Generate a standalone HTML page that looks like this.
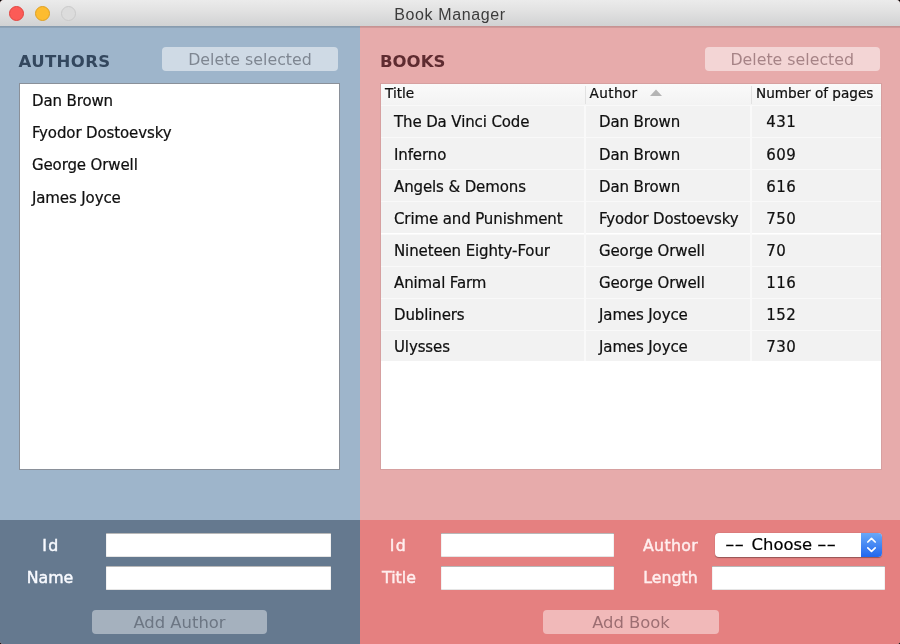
<!DOCTYPE html>
<html>
<head>
<meta charset="utf-8">
<title>Book Manager</title>
<style>
html,body{margin:0;padding:0;}
body{width:900px;height:644px;overflow:hidden;background:#000;font-family:"DejaVu Sans","Liberation Sans",sans-serif;position:relative;}
#win{will-change:transform;position:absolute;left:0;top:0;width:900px;height:644px;overflow:hidden;border-radius:4px 4px 3px 3px;background:#e8a9a9;}
.abs{position:absolute;}
#titlebar{left:0;top:0;width:900px;height:26px;background:linear-gradient(#ebebeb,#e2e2e2 40%,#d1d2d3);}
#tbline{left:0;top:26px;width:900px;height:1.5px;background:linear-gradient(rgba(0,0,0,0.16),rgba(0,0,0,0.08));}
#title{left:0;top:0;width:900px;height:26px;line-height:30px;text-align:center;font-family:"Liberation Sans",sans-serif;font-size:16px;letter-spacing:0.62px;color:#3c3c3c;}
.tl{position:absolute;top:5.5px;width:15px;height:15px;border-radius:50%;box-sizing:border-box;}
#lt-blue{left:0;top:26px;width:360px;height:494px;background:#9eb5cb;}
#dk-blue{left:0;top:519.7px;width:360px;height:125px;background:#65798f;}
#lt-pink{left:360px;top:26px;width:540px;height:494px;background:#e7abab;}
#dk-pink{left:360px;top:519.7px;width:540px;height:125px;background:#e58080;}
.h{font-weight:bold;font-size:16.5px;line-height:20px;white-space:nowrap;}
.btn{box-sizing:border-box;border-radius:4px;background:rgba(255,255,255,0.5);text-align:center;font-size:15.8px;line-height:25.6px;height:24px;white-space:nowrap;}
.box{box-sizing:border-box;background:#fff;border:1px solid #8a9099;}
.li{position:absolute;left:12.4px;font-size:15px;letter-spacing:-0.12px;-webkit-text-stroke:0.2px #000;line-height:20px;color:#111;white-space:nowrap;}
.lbl{font-size:15.8px;line-height:20.4px;-webkit-text-stroke:0.45px currentColor;color:#f8faff;text-align:center;white-space:nowrap;}
.fld{box-sizing:border-box;background:#fff;height:24px;box-shadow:inset 0 1px 0 rgba(0,0,0,0.28), inset 0 -1px 0 rgba(0,0,0,0.10), inset 1px 0 0 rgba(0,0,0,0.05), inset -1px 0 0 rgba(0,0,0,0.05);}
.th{background:linear-gradient(#fafafa,#f3f3f3);}
.ht{-webkit-text-stroke:0.2px #000;font-size:13.6px;line-height:20px;color:#111;white-space:nowrap;}
.tr{left:0;width:500px;height:32.15px;background:#f2f2f2;box-sizing:border-box;border-top:1.5px solid #f9f9f9;}
.td{top:6.5px;font-size:15px;letter-spacing:-0.12px;-webkit-text-stroke:0.2px #000;line-height:20px;color:#111;white-space:nowrap;}
.cb{top:1.6px;font-size:16.4px;line-height:22px;color:#000;white-space:nowrap;-webkit-text-stroke:0.2px #000;}
</style>
</head>
<body>
<div id="win">
  <div id="titlebar" class="abs"></div>
  <div class="tl" style="left:9.2px;background:#fc5b57;border:1px solid #e2443f;"></div>
  <div class="tl" style="left:35.1px;background:#fdbc30;border:1px solid #dfa023;"></div>
  <div class="tl" style="left:60.7px;background:#dcdcdc;border:1px solid #cacaca;"></div>
  <div id="title" class="abs">Book Manager</div>

  <div id="lt-blue" class="abs"></div>
  <div id="dk-blue" class="abs"></div>
  <div id="lt-pink" class="abs"></div>
  <div id="dk-pink" class="abs"></div>
  <div id="tbline" class="abs"></div>

  <!-- AUTHORS -->
  <div class="abs h" style="left:18.5px;top:51.8px;letter-spacing:0.4px;color:#33475e;">AUTHORS</div>
  <div class="abs btn" style="left:162px;top:47px;width:176px;color:rgba(60,66,76,0.55);">Delete selected</div>
  <div class="abs box" style="left:18.6px;top:83px;width:321.9px;height:387.4px;">
    <div class="li" style="top:7px;">Dan Brown</div>
    <div class="li" style="top:39px;">Fyodor Dostoevsky</div>
    <div class="li" style="top:71px;">George Orwell</div>
    <div class="li" style="top:104px;">James Joyce</div>
  </div>

  <div class="abs lbl" style="left:21px;top:536px;width:60px;letter-spacing:1.3px;">Id</div>
  <div class="abs lbl" style="left:20px;top:568px;width:60px;">Name</div>
  <div class="abs fld" style="left:106px;top:533.4px;width:225px;"></div>
  <div class="abs fld" style="left:106px;top:565.5px;width:225px;"></div>
  <div class="abs btn" style="left:92px;top:610px;width:175px;font-size:16.4px;background:rgba(255,255,255,0.42);color:rgba(70,78,92,0.6);">Add Author</div>

  <!-- BOOKS -->
  <div class="abs h" style="left:380px;top:51.8px;color:#5e2b30;">BOOKS</div>
  <div class="abs btn" style="left:704.5px;top:47px;width:175.5px;color:rgba(90,50,55,0.5);">Delete selected</div>
  <div id="tbl" class="abs box" style="left:380px;top:83px;width:502.4px;height:387px;border-color:#d6a0a0;">
    <div class="abs th" style="left:0;top:0;width:500px;height:21px;"></div>
    <div class="abs ht" style="left:4px;top:-0.8px;">Title</div>
    <div class="abs ht" style="left:208.6px;top:-0.8px;letter-spacing:0.35px;">Author</div>
    <svg class="abs" style="left:268.4px;top:5.2px;" width="14" height="8" viewBox="0 0 14 8"><path d="M1 7 L7 0.5 L13 7 Z" fill="#b4b4b4"/></svg>
    <div class="abs ht" style="left:375px;top:-0.8px;">Number of pages</div>
    <div class="abs" style="left:203.6px;top:2px;width:1px;height:18px;background:#e2e2e2;"></div>
    <div class="abs" style="left:369.6px;top:2px;width:1px;height:18px;background:#e2e2e2;"></div>
    <div class="abs tr" style="top:20.90px;"><span class="abs td" style="left:13px;">The Da Vinci Code</span><span class="abs td" style="left:218px;">Dan Brown</span><span class="abs td" style="left:385.2px;letter-spacing:0.45px;">431</span></div>
    <div class="abs tr" style="top:53.05px;"><span class="abs td" style="left:13px;">Inferno</span><span class="abs td" style="left:218px;">Dan Brown</span><span class="abs td" style="left:385.2px;letter-spacing:0.45px;">609</span></div>
    <div class="abs tr" style="top:85.20px;"><span class="abs td" style="left:13px;">Angels &amp; Demons</span><span class="abs td" style="left:218px;">Dan Brown</span><span class="abs td" style="left:385.2px;letter-spacing:0.45px;">616</span></div>
    <div class="abs tr" style="top:117.35px;"><span class="abs td" style="left:13px;">Crime and Punishment</span><span class="abs td" style="left:218px;">Fyodor Dostoevsky</span><span class="abs td" style="left:385.2px;letter-spacing:0.45px;">750</span></div>
    <div class="abs tr" style="top:149.50px;"><span class="abs td" style="left:13px;">Nineteen Eighty-Four</span><span class="abs td" style="left:218px;">George Orwell</span><span class="abs td" style="left:385.2px;letter-spacing:0.45px;">70</span></div>
    <div class="abs tr" style="top:181.65px;"><span class="abs td" style="left:13px;">Animal Farm</span><span class="abs td" style="left:218px;">George Orwell</span><span class="abs td" style="left:385.2px;letter-spacing:0.45px;">116</span></div>
    <div class="abs tr" style="top:213.80px;"><span class="abs td" style="left:13px;">Dubliners</span><span class="abs td" style="left:218px;">James Joyce</span><span class="abs td" style="left:385.2px;letter-spacing:0.45px;">152</span></div>
    <div class="abs tr" style="top:245.95px;height:30.9px;"><span class="abs td" style="left:13px;">Ulysses</span><span class="abs td" style="left:218px;">James Joyce</span><span class="abs td" style="left:385.2px;letter-spacing:0.45px;">730</span></div>
    <div class="abs" style="left:203.4px;top:21px;width:1.5px;height:255.9px;background:#f9f9f9;"></div>
    <div class="abs" style="left:369.4px;top:21px;width:1.5px;height:255.9px;background:#f9f9f9;"></div>
  </div>

  <div class="abs lbl" style="left:368.5px;top:536px;width:60px;letter-spacing:1.3px;color:#ffeeee;">Id</div>
  <div class="abs lbl" style="left:369px;top:568px;width:60px;color:#ffeeee;">Title</div>
  <div class="abs fld" style="left:441px;top:533.4px;width:173px;"></div>
  <div class="abs fld" style="left:441px;top:565.5px;width:173px;"></div>
  <div class="abs lbl" style="left:640px;top:536px;width:61px;letter-spacing:0.3px;color:#ffeeee;">Author</div>
  <div class="abs lbl" style="left:640px;top:568px;width:61px;color:#ffeeee;">Length</div>
  <div class="abs" style="left:715px;top:532.9px;width:167px;height:24px;border-radius:4px;background:#fff;box-shadow:0 0.5px 1px rgba(0,0,0,0.35);overflow:hidden;">
    <div class="abs cb" style="left:10.3px;transform:scaleX(1.62);transform-origin:0 50%;">--</div>
    <div class="abs cb" style="left:36.6px;">Choose</div>
    <div class="abs cb" style="left:102.3px;transform:scaleX(1.62);transform-origin:0 50%;">--</div>
    <div class="abs" style="right:0;top:0;width:21px;height:24px;background:linear-gradient(#69a8f8,#2167ee);"></div>
    <svg class="abs" style="right:0;top:0;" width="21" height="24" viewBox="0 0 21 24"><path d="M6.8 9 L10.5 5.4 L14.2 9 M6.8 14.8 L10.5 18.4 L14.2 14.8" fill="none" stroke="#fff" stroke-width="1.7" stroke-linecap="round" stroke-linejoin="round"/></svg>
  </div>
  <div class="abs fld" style="left:712.4px;top:565.5px;width:173px;"></div>
  <div class="abs btn" style="left:543px;top:610px;width:176px;font-size:16.4px;background:rgba(255,255,255,0.45);color:rgba(100,60,66,0.6);">Add Book</div>
</div>
</body>
</html>
